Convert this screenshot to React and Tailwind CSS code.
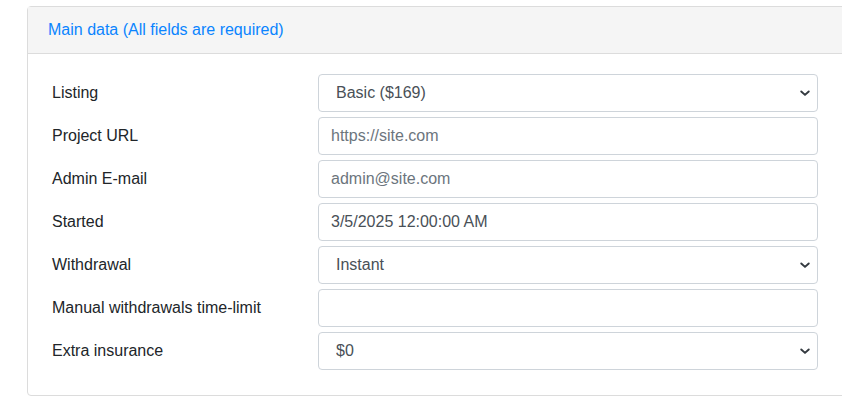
const fields = [
  { label: 'Listing', type: 'select', value: 'Basic ($169)' },
  { label: 'Project URL', type: 'input', placeholder: 'https://site.com' },
  { label: 'Admin E-mail', type: 'input', placeholder: 'admin@site.com' },
  { label: 'Started', type: 'input', value: '3/5/2025 12:00:00 AM' },
  { label: 'Withdrawal', type: 'select', value: 'Instant' },
  { label: 'Manual withdrawals time-limit', type: 'input', value: '' },
  { label: 'Extra insurance', type: 'select', value: '$0' },
];

const Chevron = () => (
  <svg viewBox="0 0 16 16" className="pointer-events-none absolute right-[7px] top-1/2 h-[12px] w-[12px] -translate-y-1/2" fill="none" stroke="#343a40" strokeWidth="2.6" strokeLinecap="round" strokeLinejoin="round">
    <path d="M3 6l5 4.5 5-4.5" />
  </svg>
);

const App = () => {
  return (
    <div className="h-[399px] w-[842px] overflow-hidden bg-white" style={{ fontFamily: '"Liberation Sans", Arial, sans-serif' }}>
      <div className="ml-[27px] mt-[6px] w-[830px] rounded-[4px] border border-[#dcdcdc]">
        <div className="flex h-[47px] items-center border-b border-[#dcdcdc] bg-[#f5f5f5] pl-[20px] text-[16px] text-[#0a84ff]">
          Main data (All fields are required)
        </div>
        <div className="flex flex-col gap-[5px] pb-[25px] pl-[24px] pt-[20px]">
          {fields.map((f) => (
            <div key={f.label} className="flex h-[38px] items-center">
              <div className="w-[266px] text-[16px] text-[#212529]">{f.label}</div>
              <div className="relative h-[38px] w-[500px]">
                {f.type === 'select' ? (
                  <>
                    <select
                      defaultValue={f.value}
                      className="h-full w-full appearance-none rounded-[4px] border border-[#ced4da] bg-white pl-[17px] text-[16px] text-[#495057] outline-none"
                    >
                      <option>{f.value}</option>
                    </select>
                    <Chevron />
                  </>
                ) : (
                  <input
                    defaultValue={f.value}
                    placeholder={f.placeholder}
                    className="h-full w-full rounded-[4px] border border-[#ced4da] bg-white px-[12px] text-[16px] text-[#495057] outline-none placeholder:text-[#6c757d]"
                  />
                )}
              </div>
            </div>
          ))}
        </div>
      </div>
    </div>
  );
};

export default App;
